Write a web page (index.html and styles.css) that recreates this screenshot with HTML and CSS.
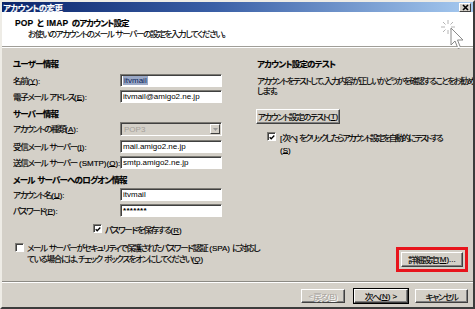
FILE: index.html
```html
<!DOCTYPE html>
<html lang="ja">
<head>
<meta charset="utf-8">
<link rel="stylesheet" href="styles.css">
</head>
<body>
<div class="window">
  <div class="titlebar">
    <span class="title">アカウントの変更</span>
    <span class="close"><svg width="9" height="7" viewBox="0 0 9 7"><path d="M2 1 L7 6 M7 1 L2 6" stroke="#000" stroke-width="1.6"/></svg></span>
  </div>
  <div class="header">
    <div class="htext">
      <div class="h1"><span class="ak">POP</span> と <span class="ak">IMAP</span> のアカウント設定</div>
      <div class="h2">お使いのアカウントのメール サーバーの設定を入力してください。</div>
    </div>
    <svg class="cursor" width="30" height="34" viewBox="0 0 30 34">
      <g stroke="#b4b4b4" stroke-width="1">
        <path d="M9 3 V7 M9 13 V17 M2 10 H6 M12 10 H16 M4 5 L6.5 7.5 M11.5 12.5 L14 15 M14 5 L11.5 7.5 M4 15 L6.5 12.5"/>
      </g>
      <path d="M12 11 L12 28 L16 24 L19 31.5 L21.5 30.5 L18.5 23 L24 23 Z" fill="#fff" stroke="#8a8a8a" stroke-width="1"/>
    </svg>
  </div>
  <div class="body">
    <div class="left">
      <div class="sec">ユーザー情報</div>
      <div class="row r1"><span class="lbl">名前<span class="ak">(<u>Y</u>):</span></span><span class="field"><span class="sel">itvmail</span></span></div>
      <div class="row r2"><span class="lbl">電子メール アドレス<span class="ak">(<u>E</u>):</span></span><span class="field">itvmail@amigo2.ne.jp</span></div>
      <div class="sec s2">サーバー情報</div>
      <div class="row r3"><span class="lbl">アカウントの種類<span class="ak">(<u>A</u>):</span></span><span class="combo"><span class="ctext">POP3</span><span class="cbtn"><svg width="5" height="3" viewBox="0 0 5 3"><path d="M0 0 H5 L2.5 3 Z" fill="#9a9a9a"/></svg></span></span></div>
      <div class="row r4"><span class="lbl">受信メール サーバー<span class="ak">(<u>I</u>):</span></span><span class="field">mail.amigo2.ne.jp</span></div>
      <div class="row r2"><span class="lbl">送信メール サーバー <span class="ak">(SMTP)(<u>O</u>):</span></span><span class="field">smtp.amigo2.ne.jp</span></div>
      <div class="sec s3">メール サーバーへのログオン情報</div>
      <div class="row r2"><span class="lbl">アカウント名<span class="ak">(<u>U</u>):</span></span><span class="field">itvmail</span></div>
      <div class="row r2"><span class="lbl">パスワード<span class="ak">(<u>P</u>):</span></span><span class="field pw">*******</span></div>
      <div class="chkrow savepw"><span class="chk"><svg width="7" height="7" viewBox="0 0 7 7"><path d="M0.8 3.2 L2.6 5 L6.2 1.2" fill="none" stroke="#000" stroke-width="1.5"/></svg></span><span>パスワードを保存する<span class="ak">(<u>R</u>)</span></span></div>
      <div class="chkrow spa"><span class="chk"></span><span>メール サーバーがセキュリティで保護されたパスワード認証 <span class="ak">(SPA)</span> に対応し<br>ている場合には、チェック ボックスをオンにしてください<span class="ak">(<u>Q</u>)</span></span></div>
    </div>
    <div class="right">
      <div class="sec">アカウント設定のテスト</div>
      <p class="para">アカウントをテストして、入力内容が正しいかどうかを確認することをお勧め<br>します。</p>
      <div class="btn testbtn">アカウント設定のテスト<span class="ak">(<u>T</u>)</span></div>
      <div class="chkrow autotest"><span class="chk"><svg width="7" height="7" viewBox="0 0 7 7"><path d="M0.8 3.2 L2.6 5 L6.2 1.2" fill="none" stroke="#000" stroke-width="1.5"/></svg></span><span><span class="ak">[</span>次へ<span class="ak">]</span> をクリックしたらアカウント設定を自動的にテストする<br><span class="ak">(<u>S</u>)</span></span></div>
      <div class="mark"><div class="btn morebtn">詳細設定<span class="ak">(<u>M</u>)...</span></div></div>
    </div>
  </div>
  <div class="footer">
    <div class="btn fbtn back disabled"><span class="ak">&lt;</span> 戻る<span class="ak">(<u>B</u>)</span></div>
    <div class="btn fbtn next">次へ<span class="ak">(<u>N</u>) &gt;</span></div>
    <div class="btn fbtn cancel">キャンセル</div>
  </div>
</div>
</body>
</html>
```

FILE: styles.css
```css
* { box-sizing: border-box; }
html, body { margin: 0; padding: 0; background: #d4d0c8; }
body {
  font-family: "Noto Sans CJK JP", "Liberation Sans", sans-serif;
  font-size: 8.5px;
  font-feature-settings: "palt";
  letter-spacing: -1.3px;
  word-spacing: 1.5px;
  color: #000;
  white-space: nowrap;
  -webkit-text-stroke: 0.15px currentColor;
}
u { text-decoration: underline; text-underline-offset: 1px; }
.ak {
  font-family: "Liberation Sans", sans-serif;
  font-size: 8px;
  letter-spacing: 0;
  word-spacing: 0;
  vertical-align: 0.5px;
}

.window {
  width: 475px;
  height: 309px;
  border: 2px solid;
  border-color: #eeece6 #3c3c3c #3c3c3c #eeece6;
  background: #d4d0c8;
  display: flex;
  flex-direction: column;
  overflow: hidden;
}

.titlebar {
  height: 10px;
  flex: none;
  background: linear-gradient(to right, #0a246a 0%, #3a5fa6 45%, #a6caf0 100%);
  display: flex;
  align-items: center;
  justify-content: space-between;
  padding: 0 2px 0 1px;
}
.title {
  color: #fff;
  font-weight: bold;
  line-height: 10px;
  letter-spacing: -0.6px;
}
.close {
  width: 12px;
  height: 9px;
  background: #d4d0c8;
  border: 1px solid;
  border-color: #fff #404040 #404040 #fff;
  display: flex;
  align-items: center;
  justify-content: center;
}
.close svg { display: block; }

.header {
  height: 35px;
  flex: none;
  background: #fff;
  border-bottom: 1px solid #a09e98;
  display: flex;
  justify-content: space-between;
  align-items: flex-start;
  padding: 5px 4px 0 13px;
}
.h1 {
  font-weight: bold;
  line-height: 10px;
  letter-spacing: -0.9px;
  word-spacing: 2.5px;
}
.h1 .ak { font-size: 8.5px; letter-spacing: 0.1px; }
.h2 {
  line-height: 10px;
  padding-left: 13px;
}
.cursor { display: block; }

.body {
  flex: 1;
  display: flex;
  padding: 10px 5px 9px 11px;
  box-shadow: inset 0 1px 0 #fff;
  border-bottom: 1px solid #8c8a84;
}
.left { width: 244px; flex: none; }
.right {
  flex: 1;
  min-width: 0;
  display: flex;
  flex-direction: column;
  align-items: flex-start;
}

.sec {
  font-weight: bold;
  line-height: 12px;
  height: 12px;
  letter-spacing: -0.8px;
}
.s2 { margin-top: 4px; }
.s3 { margin-top: 4px; }

.row {
  display: flex;
  align-items: center;
  height: 13px;
}
.r1 { margin-top: 5px; }
.r2 { margin-top: 3px; }
.r3 { margin-top: 3px; height: 14px; }
.r4 { margin-top: 4px; }
.lbl { width: 107px; flex: none; line-height: 12px; overflow: hidden; }

.field {
  width: 102px;
  height: 13px;
  background: #fff;
  border: 1px solid;
  border-color: #7c7a74 #fff #fff #7c7a74;
  box-shadow: inset 1px 1px 0 #404040;
  font-family: "Liberation Sans", sans-serif;
  font-size: 8px;
  letter-spacing: 0;
  word-spacing: 0;
  line-height: 11px;
  padding: 0 2px;
  overflow: hidden;
  -webkit-text-stroke: 0;
}
.sel {
  background: #9aa8c6;
  color: #0a1e5a;
  padding: 0 1px;
}
.pw { font-weight: bold; letter-spacing: 0.3px; }

.combo {
  width: 102px;
  height: 14px;
  background: #d4d0c8;
  border: 1px solid;
  border-color: #7c7a74 #fff #fff #7c7a74;
  box-shadow: inset 1px 1px 0 #404040;
  display: flex;
  align-items: stretch;
  padding: 1px;
}
.ctext {
  flex: 1;
  font-family: "Liberation Sans", sans-serif;
  font-size: 8px;
  letter-spacing: 0;
  color: #a4a09a;
  line-height: 11px;
  padding-left: 2px;
  -webkit-text-stroke: 0;
}
.cbtn {
  width: 10px;
  background: #d4d0c8;
  border: 1px solid;
  border-color: #fff #404040 #404040 #fff;
  display: flex;
  align-items: center;
  justify-content: center;
}
.cbtn svg { display: block; }

.chkrow {
  display: flex;
  align-items: flex-start;
  line-height: 10px;
}
.chk {
  width: 9px;
  height: 9px;
  flex: none;
  background: #fff;
  border: 1px solid;
  border-color: #7c7a74 #fff #fff #7c7a74;
  box-shadow: inset 1px 1px 0 #404040;
  display: flex;
  align-items: center;
  justify-content: center;
  margin-right: 4px;
}
.chk svg { display: block; margin: 1px 0 0 1px; }
.savepw { margin-top: 7px; padding-left: 80px; }
.savepw .chk { margin-right: 3px; }
.spa { margin-top: 6px; line-height: 11px; padding-left: 2px; }
.spa .chk { margin-top: 1px; margin-right: 3px; }

.para {
  margin: 6px 0 0 0;
  line-height: 10px;
  letter-spacing: -1.55px;
}

.btn {
  background: #d4d0c8;
  border: 1px solid;
  border-color: #fff #404040 #404040 #fff;
  box-shadow: inset -1px -1px 0 #808080;
  display: flex;
  align-items: center;
  justify-content: center;
  line-height: 11px;
}
.testbtn {
  width: 84px;
  height: 15px;
  margin-top: 14px;
  margin-left: -1px;
}
.autotest { margin-top: 8px; padding-left: 10px; letter-spacing: -2px; }
.autotest .chk { margin-right: 4px; }

.mark {
  margin-top: auto;
  align-self: flex-end;
  border: 3px solid #e8141c;
  padding: 2px;
}
.morebtn { width: 62px; height: 15px; }

.footer {
  flex: none;
  height: 25px;
  border-top: 1px solid #fff;
  display: flex;
  justify-content: flex-end;
  align-items: flex-start;
  padding: 6px 5px 0 0;
}
.fbtn { height: 14px; }
.back { width: 44px; margin-right: 9px; }
.next {
  width: 54px;
  margin-right: 7px;
  outline: 1px solid #000;
}
.cancel { width: 53px; }
.disabled { color: #a4a09a; text-shadow: 1px 1px 0 #fff; -webkit-text-stroke: 0; }
```
